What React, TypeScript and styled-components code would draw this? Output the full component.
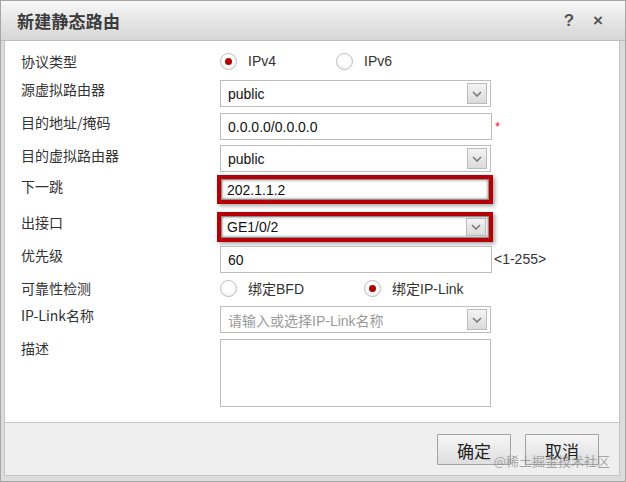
import React from 'react';
import styled, { createGlobalStyle } from 'styled-components';

const cjk = `"Noto Sans CJK SC", "Liberation Sans", sans-serif`;
const latin = `"Liberation Sans", "Noto Sans CJK SC", sans-serif`;

function Chevron() {
  return (
    <svg width="10" height="6" viewBox="0 0 10 6">
      <polyline
        points="1,1 5,5 9,1"
        fill="none"
        stroke="#7a7a7a"
        strokeWidth="1.6"
      />
    </svg>
  );
}

function Select({
  value,
  placeholder,
}: {
  value?: string;
  placeholder?: string;
}) {
  return (
    <SelectBox>
      {value ? (
        <FieldText>{value}</FieldText>
      ) : (
        <Placeholder>{placeholder}</Placeholder>
      )}
      <DropButton>
        <Chevron />
      </DropButton>
    </SelectBox>
  );
}

function RadioOption({ label, checked }: { label: string; checked?: boolean }) {
  return (
    <Option>
      <RadioDot $checked={checked} />
      <OptionText>{label}</OptionText>
    </Option>
  );
}

function App() {
  return (
    <>
      <GlobalStyle />
      <Dialog>
        <TitleBar>
          <Title>新建静态路由</Title>
          <TitleTools>
            <ToolGlyph>?</ToolGlyph>
            <ToolGlyph>×</ToolGlyph>
          </TitleTools>
        </TitleBar>
        <Body>
          <Content>
            <Row $mt={9} $center>
              <Label $center>协议类型</Label>
              <RadioGroup>
                <RadioOption label="IPv4" checked />
                <RadioOption label="IPv6" />
              </RadioGroup>
            </Row>
            <Row $mt={8}>
              <Label>源虚拟路由器</Label>
              <Select value="public" />
            </Row>
            <Row $mt={6}>
              <Label>目的地址/掩码</Label>
              <TextInput $w={272}>
                <FieldText>0.0.0.0/0.0.0.0</FieldText>
              </TextInput>
              <Required>*</Required>
            </Row>
            <Row $mt={5}>
              <Label $pt={2}>目的虚拟路由器</Label>
              <Select value="public" />
            </Row>
            <Row $mt={3}>
              <Label $pt={3}>下一跳</Label>
              <Highlight>
                <InnerInput>
                  <FieldText>202.1.1.2</FieldText>
                </InnerInput>
              </Highlight>
            </Row>
            <Row $mt={8}>
              <Label $pt={2}>出接口</Label>
              <Highlight>
                <InnerInput $h={22}>
                  <FieldText>GE1/0/2</FieldText>
                  <SmallDrop>
                    <Chevron />
                  </SmallDrop>
                </InnerInput>
              </Highlight>
            </Row>
            <Row $mt={4}>
              <Label>优先级</Label>
              <TextInput $w={272}>
                <FieldText>60</FieldText>
              </TextInput>
              <Hint>&lt;1-255&gt;</Hint>
            </Row>
            <Row $mt={4} $center>
              <Label $center>可靠性检测</Label>
              <RadioGroup>
                <RadioOption label="绑定BFD" />
                <RadioOption label="绑定IP-Link" checked />
              </RadioGroup>
            </Row>
            <Row $mt={7}>
              <Label>IP-Link名称</Label>
              <Select placeholder="请输入或选择IP-Link名称" />
            </Row>
            <Row $mt={6}>
              <Label>描述</Label>
              <TextArea />
            </Row>
          </Content>
          <Footer>
            <Button>确定</Button>
            <Button>取消</Button>
            <Watermark>@稀土掘金技术社区</Watermark>
          </Footer>
        </Body>
      </Dialog>
    </>
  );
}

const GlobalStyle = createGlobalStyle`
  html, body {
    margin: 0;
    padding: 0;
    background: #ffffff;
  }
  * {
    box-sizing: border-box;
  }
`;

const Dialog = styled.div`
  width: 626px;
  height: 482px;
  display: flex;
  flex-direction: column;
  border: 1px solid #a6a6a6;
  background: #dcdcdc;
  font-family: ${cjk};
  color: #333;
`;

const TitleBar = styled.div`
  height: 40px;
  flex: none;
  display: flex;
  align-items: center;
  justify-content: space-between;
  padding: 0 22px 0 16px;
  background: linear-gradient(#f8f8f8, #e6e6e6 50%, #d6d6d6);
  border-bottom: 1px solid #bdbdbd;
`;

const Title = styled.div`
  font-size: 17px;
  font-weight: 700;
  color: #3c3c3c;
  letter-spacing: 0.2px;
`;

const TitleTools = styled.div`
  display: flex;
  gap: 19px;
  align-items: center;
`;

const ToolGlyph = styled.span`
  font-family: ${latin};
  font-size: 17px;
  font-weight: 700;
  color: #555;
  line-height: 1;
`;

const Body = styled.div`
  flex: 1;
  display: flex;
  flex-direction: column;
  margin: 0 5px 5px 3px;
  border: 1px solid #c4c4c4;
  border-top: none;
`;

const Content = styled.div`
  flex: 1;
  display: flex;
  flex-direction: column;
  background: #ffffff;
  padding-left: 16px;
`;

const Row = styled.div<{ $mt: number; $center?: boolean }>`
  display: flex;
  align-items: ${(p) => (p.$center ? 'center' : 'flex-start')};
  margin-top: ${(p) => p.$mt}px;
`;

const Label = styled.div<{ $center?: boolean; $pt?: number }>`
  width: 199px;
  flex: none;
  font-size: 14px;
  line-height: 16px;
  color: #333;
  padding-top: ${(p) => (p.$center ? 0 : p.$pt ?? 1)}px;
`;

const RadioGroup = styled.div`
  display: flex;
  align-items: center;
  gap: 60px;
  height: 22px;
`;

const Option = styled.div`
  display: flex;
  align-items: center;
  gap: 11px;
`;

const RadioDot = styled.span<{ $checked?: boolean }>`
  width: 17px;
  height: 17px;
  border-radius: 50%;
  border: 1px solid #bcbcbc;
  background: radial-gradient(circle at 50% 35%, #ffffff 40%, #ececec);
  display: flex;
  align-items: center;
  justify-content: center;
  &::after {
    content: '';
    width: 7px;
    height: 7px;
    border-radius: 50%;
    background: ${(p) => (p.$checked ? '#b40000' : 'transparent')};
  }
`;

const OptionText = styled.span`
  font-family: ${latin};
  font-size: 14px;
  color: #333;
`;

const SelectBox = styled.div`
  width: 271px;
  height: 27px;
  display: flex;
  align-items: center;
  justify-content: space-between;
  border: 1px solid #bdbdbd;
  background: #fff;
  padding: 0 3px 0 7px;
`;

const TextInput = styled.div<{ $w: number }>`
  width: ${(p) => p.$w}px;
  height: 27px;
  display: flex;
  align-items: center;
  border: 1px solid #bdbdbd;
  background: #fff;
  padding: 0 7px;
`;

const FieldText = styled.span`
  font-family: ${latin};
  font-size: 14px;
  color: #111;
`;

const Placeholder = styled.span`
  font-family: ${latin};
  font-size: 14px;
  color: #9a9a9a;
`;

const DropButton = styled.span`
  width: 20px;
  height: 21px;
  display: flex;
  align-items: center;
  justify-content: center;
  border: 1px solid #bbbbbb;
  background: linear-gradient(#f4f4f4, #dadada);
`;

const SmallDrop = styled(DropButton)`
  height: 18px;
`;

const Required = styled.span`
  color: #e02020;
  font-family: ${latin};
  font-size: 13px;
  margin: 6px 0 0 3px;
`;

const Hint = styled.span`
  font-family: ${latin};
  font-size: 14px;
  color: #333;
  margin: 5px 0 0 2px;
`;

const Highlight = styled.div`
  width: 276px;
  margin-left: -3px;
  border: 4px solid #b50008;
  box-shadow: 2px 2px 4px rgba(0, 0, 0, 0.35);
`;

const InnerInput = styled.div<{ $h?: number }>`
  height: ${(p) => p.$h ?? 21}px;
  display: flex;
  align-items: center;
  justify-content: space-between;
  background: #fff;
  border: 1px solid #8c8c8c;
  box-shadow: inset 0 0 3px rgba(0, 0, 0, 0.5);
  padding: 0 2px 0 5px;
`;

const TextArea = styled.div`
  width: 271px;
  height: 68px;
  border: 1px solid #bdbdbd;
  background: #fff;
`;

const Footer = styled.div`
  position: relative;
  height: 53px;
  flex: none;
  display: flex;
  justify-content: flex-end;
  align-items: flex-start;
  gap: 14px;
  padding: 11px 20px 0 0;
  background: #efefef;
  border-top: 1px solid #c8c8c8;
`;

const Button = styled.button`
  width: 74px;
  height: 31px;
  font-family: ${cjk};
  font-size: 17px;
  color: #222;
  padding: 2px 0 0;
  border: 1px solid #a3a3a3;
  border-radius: 1px;
  background: linear-gradient(#f6f6f6, #dedede);
`;

const Watermark = styled.span`
  position: absolute;
  right: 9px;
  top: 28px;
  font-family: ${cjk};
  font-size: 13px;
  color: rgba(140, 140, 140, 0.75);
  pointer-events: none;
`;

export default App;
